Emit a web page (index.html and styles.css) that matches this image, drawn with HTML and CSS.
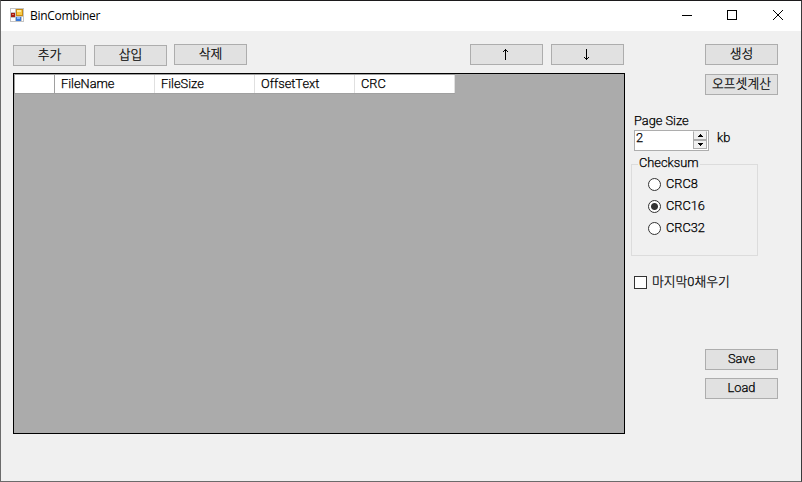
FILE: index.html
```
<!DOCTYPE html>
<html lang="ko">
<head>
<meta charset="utf-8">
<title>BinCombiner</title>
<link rel="stylesheet" href="styles.css">
</head>
<body>
<div class="window">
  <header class="titlebar">
    <svg class="app-icon" width="14" height="14" viewBox="0 0 14 14" shape-rendering="crispEdges">
      <path fill="#c4c4c4" d="M0 0h14v14H0z"/>
      <path fill="#fff" d="M1 1h4v3H1zM1 10h4v3H1zM12 9h1v4h-1z"/>
      <path fill="#a51d12" d="M1 5h4v4H1z"/><path fill="#e0725c" d="M2 6h2v1H2z"/>
      <path fill="#c98b12" d="M6 1h7v7H6z"/><path fill="#f8ca45" d="M7 2h5v5H7z"/><path fill="#ffeaa0" d="M7 2h4v2H7z"/>
      <path fill="#3978d8" d="M6 9h5v4H6z"/><path fill="#8bb8fa" d="M7 9h3v2H7z"/>
    </svg>
    <h1 class="title">BinCombiner</h1>
    <svg class="controls" width="104" height="12" viewBox="0 0 104 12" fill="none" stroke="#000">
      <path d="M0 5.5h10M45.500 .5h9v9h-9z" shape-rendering="crispEdges"/>
      <path d="M91 0l10 10M101 0l-10 10"/>
    </svg>
  </header>
  <main class="content">
    <section class="files">
      <div class="toolbar">
        <button class="btn lowered">추가</button>
        <button class="btn lowered">삽입</button>
        <button class="btn remove">삭제</button>
        <button class="btn up"><svg width="5" height="11" viewBox="0 0 5 11" shape-rendering="crispEdges"><path d="M2 0h1v11H2zM1 1h3v1H1zM0 2h1v1H0zM4 2h1v1H4z"/></svg></button>
        <button class="btn"><svg width="5" height="11" viewBox="0 0 5 11" shape-rendering="crispEdges"><path d="M2 0h1v11H2zM1 9h3v1H1zM0 8h1v1H0zM4 8h1v1H4z"/></svg></button>
      </div>
      <div class="grid">
        <div class="grid-head">
          <span class="corner"></span>
          <span class="col">FileName</span>
          <span class="col">FileSize</span>
          <span class="col">OffsetText</span>
          <span class="col">CRC</span>
        </div>
      </div>
    </section>
    <aside class="side">
      <button class="btn">생성</button>
      <button class="btn calc">오프셋계산</button>
      <div class="label">Page Size</div>
      <div class="size-row">
        <div class="spinner">
          <span class="value">2</span>
          <span class="arrows">
            <span class="arrow"><svg width="5" height="3" viewBox="0 0 5 3" shape-rendering="crispEdges"><path d="M2 0h1v1h1v1h1v1H0V2h1V1h1z"/></svg></span>
            <span class="arrow"><svg width="5" height="3" viewBox="0 0 5 3" shape-rendering="crispEdges"><path d="M0 0h5v1H4v1H3v1H2V2H1V1H0z"/></svg></span>
          </span>
        </div>
        <span class="unit">kb</span>
      </div>
      <fieldset class="group">
        <legend>Checksum</legend>
        <label class="radio"><i></i><span>CRC8</span></label>
        <label class="radio on"><i></i><span>CRC16</span></label>
        <label class="radio"><i></i><span>CRC32</span></label>
      </fieldset>
      <label class="check"><i></i><span>마지막0채우기</span></label>
      <button class="btn save">Save</button>
      <button class="btn load">Load</button>
    </aside>
  </main>
</div>
</body>
</html>
```
FILE: styles.css
```
* { box-sizing: border-box; }
body {
  margin: 0;
  font: 300 12.8px/14px Roboto, "Noto Sans CJK KR", sans-serif;
  -webkit-text-stroke: 0.25px #000;
  color: #000;
}
svg { display: block; flex: none; }
.window {
  width: 802px;
  height: 482px;
  border: 1px solid #6b6b6b;
  border-top-color: #1c1a1c;
  border-right-color: #39393b;
  background: #f0f0f0;
  overflow: hidden;
}
.titlebar {
  display: flex;
  height: 30px;
  padding: 7px 15px 0 9px;
  background: #fff;
}
.title {
  margin: 0 0 0 6px;
  font: 12px/16px "Open Sans", sans-serif;
  letter-spacing: -0.3px;
  -webkit-text-stroke: 0;
}
.controls { margin: 2px 0 0 auto; }
.content { display: flex; }
.files { width: 612px; margin: 13px 0 0 12px; }
.toolbar { display: flex; height: 29px; }
.btn {
  display: flex;
  flex: none;
  align-items: center;
  justify-content: center;
  width: 73px;
  height: 21px;
  margin: 0;
  padding: 0 0 2px;
  border: 1px solid #adadad;
  background: #e1e1e1;
  color: #000;
  font: inherit;
  white-space: nowrap;
}
.btn svg { margin: 1px 2px 0 0; }
.toolbar .btn { margin-right: 8px; }
.toolbar .lowered { margin-top: 1px; }
.toolbar .lowered + .lowered { margin-right: 7px; }
.toolbar .up { margin-left: 215px; }
.toolbar .btn:last-child { margin-right: 0; }
.grid {
  height: 361px;
  border: 1px solid #000;
  background: #ababab;
}
.grid-head {
  display: flex;
  width: 441px;
  height: 20px;
  border: solid #a0a0a0;
  border-width: 1px 0 1px 1px;
  background: #fff;
}
.corner { width: 40px; border-right: 1px solid #a0a0a0; }
.col {
  width: 100px;
  padding: 2px 0 0 6px;
  border-right: 1px solid #e0e0e0;
}
.side { width: 147px; margin: 13px 0 0 6px; }
.side .btn { margin-left: 74px; }
.side .calc { margin-top: 9px; }
.label { margin: 19px 0 0 3px; height: 16px; }
.size-row { display: flex; margin-left: 3px; }
.spinner {
  display: flex;
  justify-content: space-between;
  width: 75px;
  height: 21px;
  padding: 0 1px;
  border: 1px solid #adadad;
  background: #fff;
}
.arrows { width: 14px; }
.arrow {
  display: flex;
  align-items: center;
  justify-content: center;
  height: 9px;
  border: 1px solid #adadad;
  background: #f0f0f0;
}
.arrow:first-child { border-top-color: #f0f0f0; }
.unit { margin: 1px 0 0 8px; }
.group {
  width: 127px;
  height: 100px;
  margin: 5px 0 0;
  padding: 1px 0 0 16px;
  border: 1px solid #dcdcdc;
}
.group legend { margin-left: -10px; padding: 0 1px; height: 17px; line-height: 14px; }
.group .radio:first-of-type { margin-top: -1px; }
.radio { display: flex; align-items: center; height: 22px; }
.radio i {
  width: 13px;
  height: 13px;
  margin-right: 5px;
  border: 1px solid #333;
  border-radius: 50%;
  background: #fff;
}
.radio.on i { background: radial-gradient(circle, #333 3px, #fff 4px); }
.check { display: flex; align-items: center; height: 14px; margin: 19px 0 0 3px; white-space: nowrap; }
.check i { width: 13px; height: 13px; margin-right: 5px; border: 1px solid #333; background: #fff; }
.side .save { margin-top: 60px; }
.side .load { margin-top: 8px; }
```
